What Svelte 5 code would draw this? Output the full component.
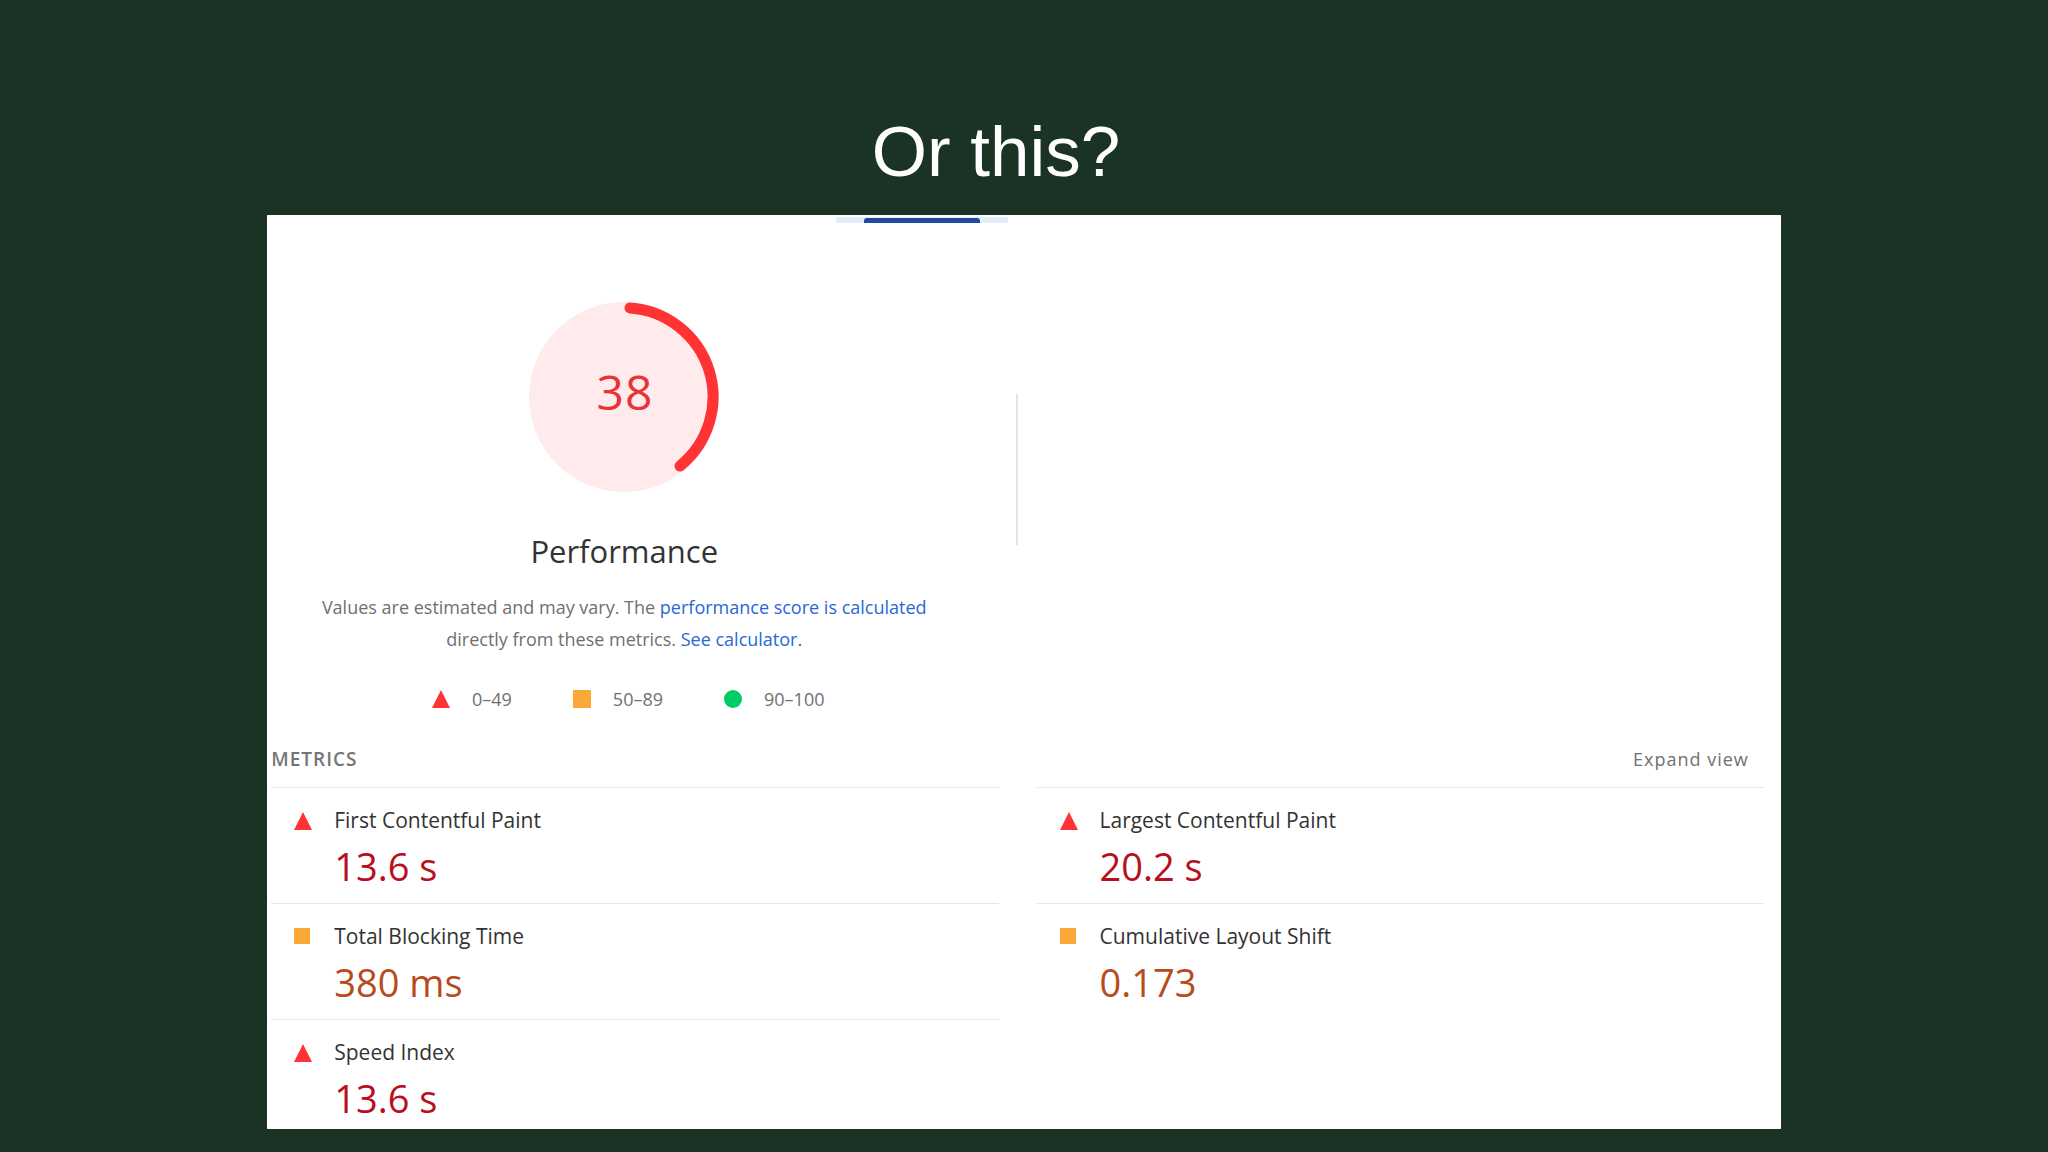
<script>
  const metrics = [
    { name: 'First Contentful Paint', value: '13.6 s', level: 'fail' },
    { name: 'Largest Contentful Paint', value: '20.2 s', level: 'fail' },
    { name: 'Total Blocking Time', value: '380 ms', level: 'average' },
    { name: 'Cumulative Layout Shift', value: '0.173', level: 'average' },
    { name: 'Speed Index', value: '13.6 s', level: 'fail' }
  ];
  const scale = [
    { range: '0–49', level: 'fail' },
    { range: '50–89', level: 'average' },
    { range: '90–100', level: 'pass' }
  ];
</script>

{#snippet marker(level)}
  <svg class="marker {level}" viewBox="0 0 20 20" aria-hidden="true">
    {#if level === 'fail'}
      <path d="M10 0 20 20H0z" fill="#ff3333" />
    {:else if level === 'average'}
      <path d="M0 0h20v20H0z" fill="#faa936" />
    {:else}
      <circle cx="10" cy="10" r="10" fill="#0c6" />
    {/if}
  </svg>
{/snippet}

<main class="slide">
  <h1>Or this?</h1>

  <div class="report">
    <div class="tab"><span></span></div>

    <div class="summary">
      <section class="score">
        <svg class="gauge" viewBox="0 0 190 190" role="img" aria-label="Score 38">
          <circle cx="95" cy="95" r="95" fill="#ffebeb" />
          <path d="M101 6A89 89 0 0 1 151 164" fill="none" stroke="#ff3333" stroke-width="11" stroke-linecap="round" />
          <text x="96" y="108" text-anchor="middle">38</text>
        </svg>
        <h2>Performance</h2>
        <p>
          Values are estimated and may vary. The <a href="#score">performance score is calculated</a><br />
          directly from these metrics. <a href="#calculator">See calculator.</a>
        </p>
        <ul class="scale">
          {#each scale as item}
            <li>{@render marker(item.level)}<span>{item.range}</span></li>
          {/each}
        </ul>
      </section>
      <div class="divider"></div>
    </div>

    <section class="metrics">
      <header>
        <h3>METRICS</h3>
        <button type="button">Expand view</button>
      </header>
      <div class="grid">
        {#each metrics as metric}
          <div class="metric {metric.level}">
            <div class="icon">{@render marker(metric.level)}</div>
            <div>
              <div class="name">{metric.name}</div>
              <div class="value">{metric.value}</div>
            </div>
          </div>
        {/each}
      </div>
    </section>
  </div>
</main>

<style>
  :global(body) {
    margin: 0;
    background: #1a3325;
  }

  .slide {
    box-sizing: border-box;
    min-height: 100vh;
    padding: 110px 13% 23px;
    background: #1a3325;
    font-family: 'Open Sans', 'Noto Sans', sans-serif;
    color: #333;
  }

  h1 {
    margin: 0;
    padding: 0 56px 21px 0;
    color: #fff;
    font: 400 71px/84px 'Liberation Sans', Arial, sans-serif;
    text-align: center;
  }

  .report {
    margin: 0 1px;
    background: #fff;
    padding-bottom: 2px;
  }

  .tab {
    display: flex;
    justify-content: center;
    width: 172px;
    height: 6px;
    margin-left: 569px;
    border-top: 2px solid #fff;
    background: #e4eefa;
  }

  .tab span {
    width: 116px;
    height: 5px;
    margin-top: 1px;
    border-radius: 3px 3px 0 0;
    background: #2149a0;
  }

  .summary {
    display: flex;
    gap: 35px;
    padding-top: 79px;
  }

  .score {
    display: flex;
    flex-direction: column;
    align-items: center;
    width: 714px;
  }

  .gauge {
    width: 190px;
    height: 190px;
  }

  .gauge text {
    fill: #eb3237;
    font-size: 48px;
    font-weight: 500;
    letter-spacing: 1px;
  }

  .divider {
    width: 2px;
    height: 151px;
    margin-top: 92px;
    background: #e4e4e4;
  }

  h2 {
    margin: 39px 0 0;
    font-size: 31px;
    font-weight: 400;
    line-height: 40px;
  }

  p {
    margin: 20px 0 0;
    color: #707070;
    font-size: 18px;
    line-height: 32px;
    text-align: center;
    white-space: nowrap;
  }

  a {
    color: #2a67d8;
    text-decoration: none;
  }

  .marker {
    display: block;
    width: 18px;
    height: 18px;
  }

  .scale {
    display: flex;
    gap: 61px;
    margin: 32px 0 0;
    padding: 0 0 0 8px;
    color: #707070;
    font-size: 18px;
    line-height: 24px;
    list-style: none;
  }

  .scale li {
    display: flex;
    align-items: center;
    gap: 22px;
  }

  .metrics {
    padding: 32px 17px 0 4px;
  }

  header {
    display: flex;
    justify-content: space-between;
    align-items: center;
    height: 32px;
    padding: 0 15px 12px 0;
  }

  h3 {
    margin: 0;
    color: #757575;
    font-size: 19px;
    font-weight: 600;
    letter-spacing: 1px;
    line-height: 32px;
  }

  button {
    padding: 0;
    border: 0;
    background: none;
    color: #707070;
    font: inherit;
    font-size: 18px;
    letter-spacing: 1px;
    line-height: 32px;
  }

  .grid {
    display: grid;
    grid-template-columns: 1fr 1fr;
    column-gap: 38px;
  }

  .metric {
    display: flex;
    gap: 22px;
    padding: 16px 0 11px 23px;
    border-top: 1px solid #e6e6e6;
  }

  .metric:last-child {
    padding-bottom: 3px;
  }

  .icon {
    width: 18px;
    padding-top: 8px;
  }

  .icon .average {
    width: 16px;
    height: 16px;
  }

  .name {
    font-size: 21px;
    line-height: 32px;
  }

  .value {
    padding-top: 4px;
    font-size: 38px;
    line-height: 52px;
  }

  .fail .value {
    color: #b80f20;
  }

  .average .value {
    color: #b84a1c;
  }
</style>
